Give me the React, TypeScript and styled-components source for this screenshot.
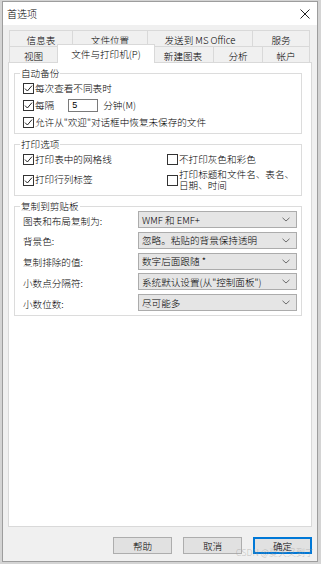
import React from 'react';
import styled, {createGlobalStyle} from 'styled-components';

const GlobalStyle = createGlobalStyle`
  html, body {
    margin: 0;
    padding: 0;
  }
  body {
    background: #d4d4d4;
    font-family: "Noto Sans CJK SC", "Liberation Sans", sans-serif;
    font-size: 9.6px;
    font-weight: 300;
    color: #000;
  }
`;

const Window = styled.div`
  position: relative;
  margin: 1px 0 0 2px;
  width: 316px;
  height: 561px;
  box-sizing: border-box;
  border: 1px solid #9d9d9d;
  background: #f0f0f0;
  display: flex;
  flex-direction: column;
`;

const TitleBar = styled.div`
  height: 23px;
  background: #fff;
  display: flex;
  align-items: center;
  justify-content: space-between;
  padding: 0 7px 0 4px;
  font-size: 10px;
  line-height: 12px;
`;

const Body = styled.div`
  flex: 1;
  display: flex;
  flex-direction: column;
  padding: 5px 5px 0 5px;
`;

const Tabs = styled.div`
  margin-left: 1px;
  width: 301px;
`;

const TabRow = styled.div`
  display: flex;
  align-items: flex-start;
  height: 16px;
`;

const Tab = styled.div<{ $w: number; $active?: boolean }>`
  box-sizing: border-box;
  width: ${p => p.$w}px;
  height: 16px;
  border: 1px solid #d9d9d9;
  border-bottom: none;
  background: #f0f0f0;
  display: flex;
  align-items: center;
  justify-content: center;
  padding-top: 2px;
  line-height: 12px;
  white-space: nowrap;
  & + & {
    border-left: none;
  }
  ${p => p.$active && `
    position: relative;
    z-index: 2;
    width: ${p.$w + 3}px;
    height: 19px;
    margin: -2px -2px 0 -1px;
    background: #fff;
    border-left: 1px solid #d9d9d9 !important;
    padding-top: 0;
  `}
`;

const Panel = styled.div`
  box-sizing: border-box;
  height: 465px;
  background: #fff;
  border: 1px solid #d9d9d9;
  padding: 0 9px 0 5px;
  display: flex;
  flex-direction: column;
`;

const Group = styled.fieldset<{ $top: number; $bottom: number }>`
  margin: ${p => p.$top}px 0 0 0;
  padding: 0 0 ${p => p.$bottom}px 8px;
  border: 1px solid #dcdcdc;
  min-width: 0;
`;

const Legend = styled.legend<{ $lh: number }>`
  padding: 0 1px;
  margin-left: -3px;
  line-height: ${p => p.$lh}px;
`;

const CheckRow = styled.div<{ $h?: number }>`
  display: flex;
  align-items: center;
  height: ${p => p.$h ?? 17}px;
  line-height: 11.5px;
  white-space: nowrap;
`;

const Box = styled.span`
  box-sizing: border-box;
  flex: none;
  width: 11px;
  height: 11px;
  border: 1px solid #333;
  background: #fff;
  margin-right: 1px;
  display: flex;
  align-items: center;
  justify-content: center;
`;

const Spin = styled.span`
  box-sizing: border-box;
  width: 30px;
  height: 13px;
  margin: 0 5px 0 14px;
  border: 1px solid #7a7a7a;
  background: #fff;
  padding-left: 3px;
  line-height: 11px;
  font-family: "Liberation Sans", sans-serif;
  font-size: 9px;
`;

const PrintGrid = styled.div`
  display: grid;
  grid-template-columns: 144px 1fr;
  grid-template-rows: 17px 24px;
`;

const ComboList = styled.div`
  display: flex;
  flex-direction: column;
  gap: 3.75px;
`;

const ComboRow = styled.div`
  display: flex;
  align-items: center;
  height: 17px;
`;

const ComboLabel = styled.span`
  width: 115px;
  line-height: 12px;
  padding-top: 2px;
`;

const Combo = styled.div`
  box-sizing: border-box;
  width: 159px;
  height: 17px;
  background: #e5e5e5;
  border: 1px solid #acacac;
  display: flex;
  align-items: center;
  justify-content: space-between;
  padding: 0 6px 0 3px;
  line-height: 12px;
  white-space: nowrap;
`;

const Buttons = styled.div`
  display: flex;
  justify-content: flex-end;
  gap: 11px;
  margin-top: 10px;
`;

const Button = styled.div<{ $default?: boolean }>`
  box-sizing: border-box;
  width: 59px;
  height: 17px;
  background: #e1e1e1;
  border: 1px solid ${p => (p.$default ? '#0078d7' : '#adadad')};
  box-shadow: ${p => (p.$default ? 'inset 0 0 0 1px #0078d7' : 'none')};
  display: flex;
  align-items: center;
  justify-content: center;
  line-height: 12px;
`;

const Watermark = styled.div`
  position: absolute;
  right: 3px;
  bottom: 3px;
  font-size: 9px;
  line-height: 11px;
  color: rgba(150, 150, 150, 0.55);
  pointer-events: none;
`;

const Check: React.FC<{ on?: boolean }> = ({on}) => (
    <Box>
        {on && (
            <svg width="9" height="9" viewBox="0 0 9 9">
                <path d="M1 4.6 L3.4 7 L8 1.6" fill="none" stroke="#222" strokeWidth="1"/>
            </svg>
        )}
    </Box>
);

const Chevron = () => (
    <svg width="8" height="5" viewBox="0 0 8 5">
        <path d="M0.5 0.8 L4 4 L7.5 0.8" fill="none" stroke="#606060" strokeWidth="0.9"/>
    </svg>
);

const combos: [string, string][] = [
    ['图表和布局复制为:', 'WMF 和 EMF+'],
    ['背景色:', '忽略。粘贴的背景保持透明'],
    ['复制排除的值:', '数字后面跟随 *'],
    ['小数点分隔符:', '系统默认设置(从"控制面板")'],
    ['小数位数:', '尽可能多'],
];

const App: React.FC = () => {
    return (
        <>
            <GlobalStyle/>
            <Window>
                <TitleBar>
                    <span>首选项</span>
                    <svg width="10" height="10" viewBox="0 0 10 10">
                        <path d="M0.5 0.5 L9.5 9.5 M9.5 0.5 L0.5 9.5" stroke="#222" strokeWidth="1"/>
                    </svg>
                </TitleBar>
                <Body>
                    <Tabs>
                        <TabRow>
                            <Tab $w={64}>信息表</Tab>
                            <Tab $w={75}>文件位置</Tab>
                            <Tab $w={105}>发送到 MS Office</Tab>
                            <Tab $w={57}>服务</Tab>
                        </TabRow>
                        <TabRow>
                            <Tab $w={49}>视图</Tab>
                            <Tab $w={95} $active>文件与打印机(P)</Tab>
                            <Tab $w={61}>新建图表</Tab>
                            <Tab $w={49}>分析</Tab>
                            <Tab $w={47}>帐户</Tab>
                        </TabRow>
                    </Tabs>
                    <Panel>
                        <Group $top={4} $bottom={2}>
                            <Legend $lh={13}>自动备份</Legend>
                            <CheckRow><Check on/>每次查看不同表时</CheckRow>
                            <CheckRow><Check on/>每隔<Spin>5</Spin>分钟(M)</CheckRow>
                            <CheckRow><Check on/>允许从"欢迎"对话框中恢复未保存的文件</CheckRow>
                        </Group>
                        <Group $top={4} $bottom={3}>
                            <Legend $lh={13}>打印选项</Legend>
                            <PrintGrid>
                                <CheckRow><Check on/>打印表中的网格线</CheckRow>
                                <CheckRow><Check/>不打印灰色和彩色</CheckRow>
                                <CheckRow $h={24}><Check on/>打印行列标签</CheckRow>
                                <CheckRow $h={24}><Check/><span>打印标题和文件名、表名、<br/>日期、时间</span></CheckRow>
                            </PrintGrid>
                        </Group>
                        <Group $top={5} $bottom={4}>
                            <Legend $lh={10}>复制到剪贴板</Legend>
                            <ComboList>
                                {combos.map(([label, value]) => (
                                    <ComboRow key={label}>
                                        <ComboLabel>{label}</ComboLabel>
                                        <Combo><span>{value}</span><Chevron/></Combo>
                                    </ComboRow>
                                ))}
                            </ComboList>
                        </Group>
                    </Panel>
                    <Buttons>
                        <Button>帮助</Button>
                        <Button>取消</Button>
                        <Button $default>确定</Button>
                    </Buttons>
                </Body>
                <Watermark>CSDN @夏天又到了</Watermark>
            </Window>
        </>
    );
};

export default App;
